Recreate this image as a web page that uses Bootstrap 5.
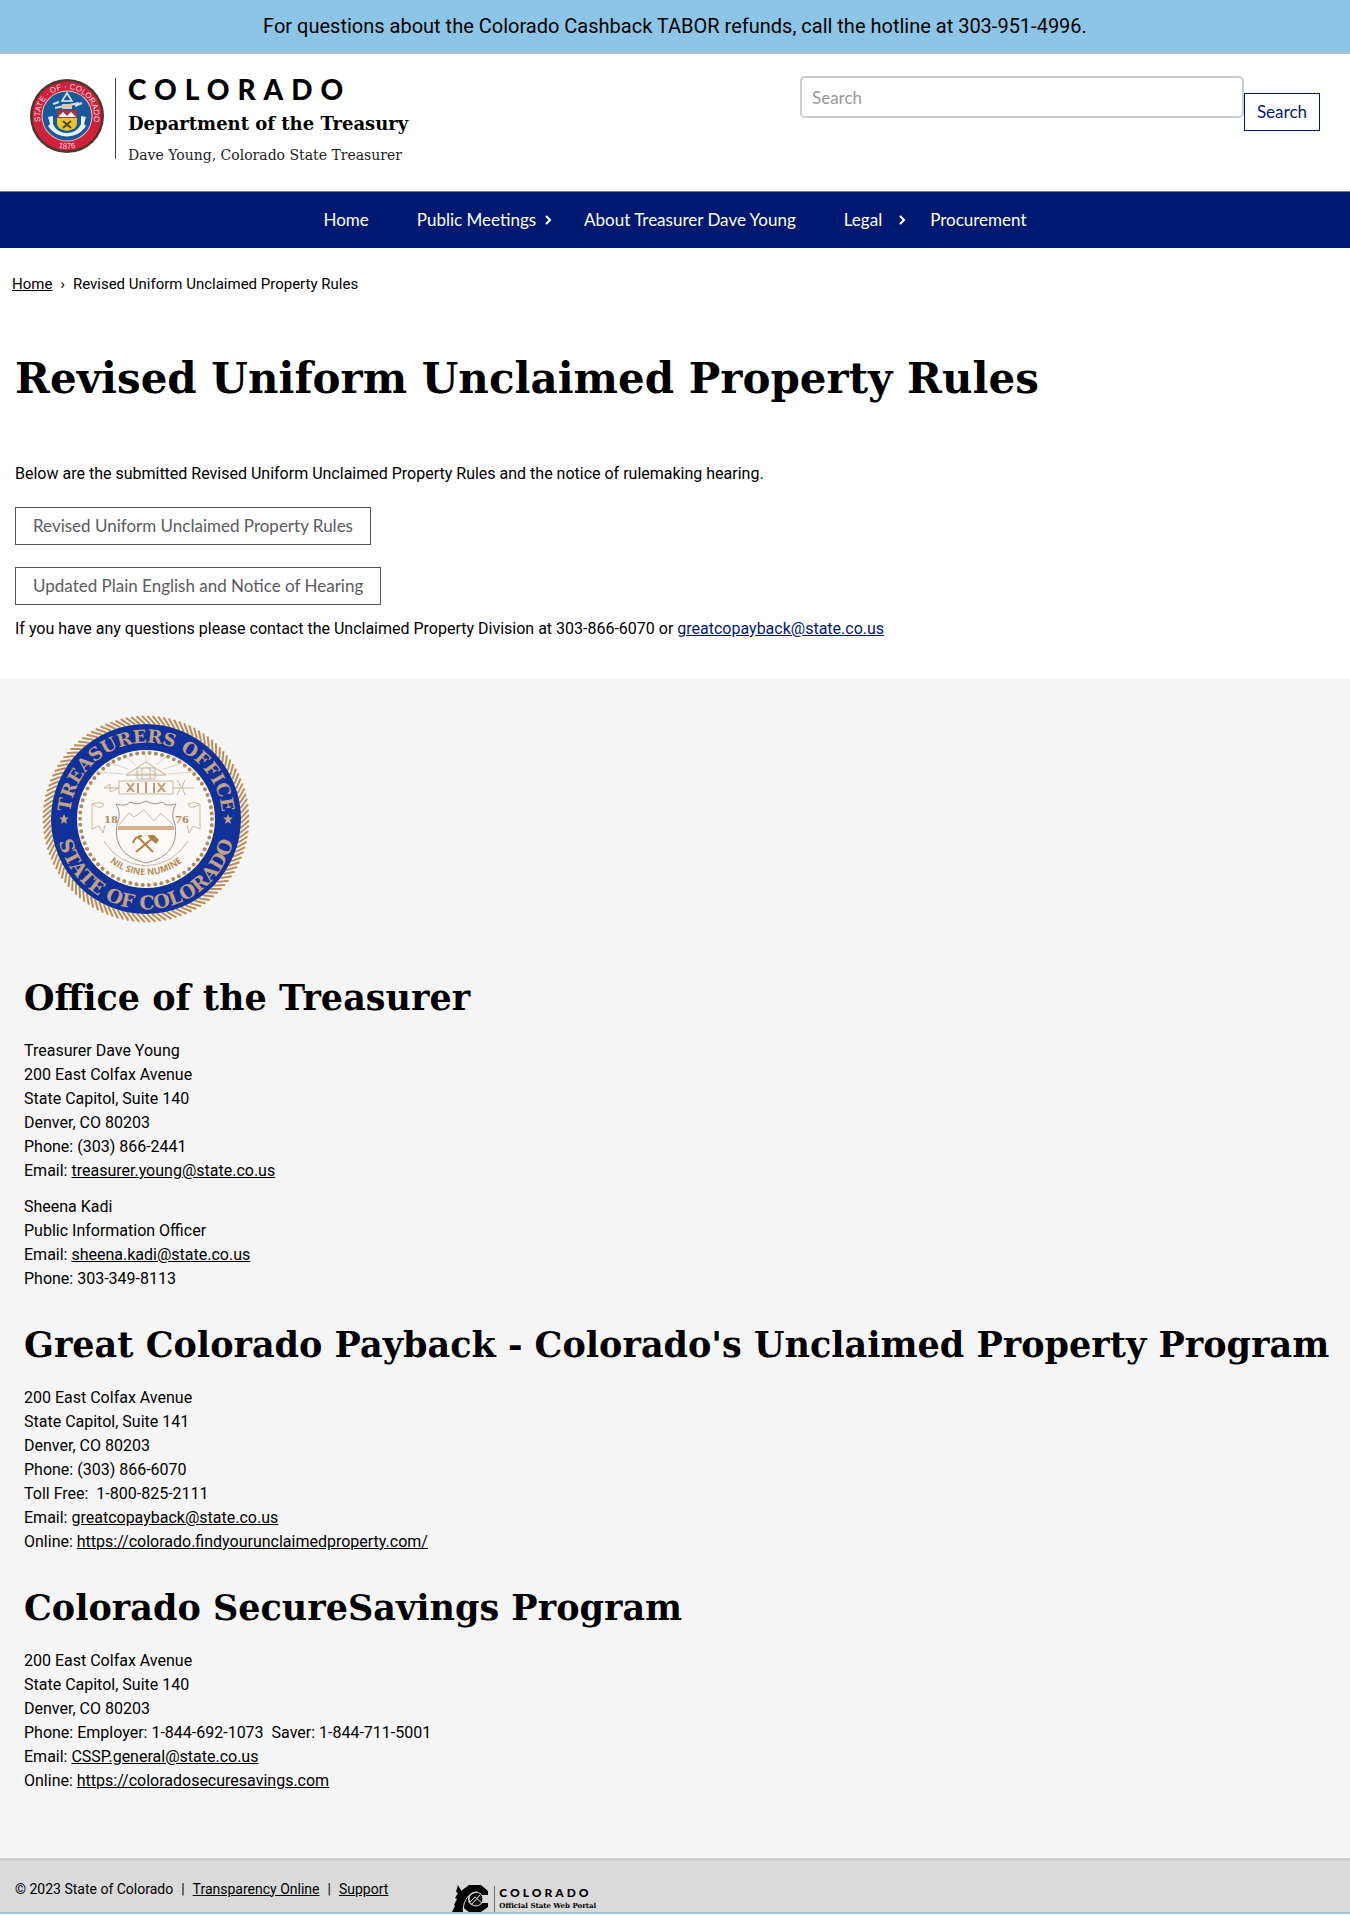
<!DOCTYPE html>
<html lang="en">
<head>
<meta charset="utf-8">
<meta name="viewport" content="width=device-width, initial-scale=1">
<title>Revised Uniform Unclaimed Property Rules | Department of the Treasury</title>
<link href="https://cdn.jsdelivr.net/npm/bootstrap@5.3.0/dist/css/bootstrap.min.css" rel="stylesheet">
<style>
:root { --navy: #001970; --slab: "DejaVu Serif", serif; --humanist: Lato, sans-serif; }
body { font-family: Roboto, "Open Sans", sans-serif; font-size: 16px; line-height: 24px; color: #000; }
.hotline { background: #8dc5e6; border-bottom: 2px solid #a9c3da; font-size: 20px; line-height: 28px; padding: 12px 16px; }
.brand-area { padding: 22px 30px 32px; }
.brand-link { margin-top: 2px; }
.brand-rule { border-left: 1px solid #444; margin-left: 11px; padding-left: 12px; height: 81px; }
.brand-word { font: 900 28px/22px Lato, sans-serif; letter-spacing: 8px; }
.brand-dept { font: bold 18px/24px var(--slab); margin-top: 12px; }
.brand-person { font: 14px/20px var(--slab); margin-top: 9px; color: #222; }
.search-form { width: 520px; max-width: 100%; }
.search-form .form-control { height: 42px; border: 2px solid #ccc; border-radius: 5px; font: 17px/24px var(--humanist); padding: 6px 10px; }
.search-form .form-control::placeholder { color: #999; }
.search-btn, .doc-btn { border-radius: 0; font: 17px/24px var(--humanist); padding: 6px 12px; height: 38px; }
.search-btn { border-color: var(--navy); color: var(--navy); margin-top: 17px; }
.doc-btn { border-color: #555; color: #5a5a60; padding: 6px 17px; }
.doc-list { gap: 22px; }
.main-nav { background: var(--navy); border-top: 1px solid #777; font: 17px/24px var(--humanist); }
.main-nav .nav-link { color: #fff; padding: 16px 24px; }
.main-nav .chevron-slot { width: 8px; }
.crumbs { font-size: 15px; padding: 24px 12px; }
.crumbs a, .site-info a, .legal-bar a { color: #000; }
.content { padding: 0 15px 37px; }
h1, h2 { font-family: var(--slab); font-weight: bold; }
h1 { font-size: 42px; line-height: 56px; margin: 31px 0 55px; }
.content a.mail { color: var(--navy); }
.intro-line { margin: 0 0 21px; }
.contact-line { margin: 12px 0 0; }
.site-info { background: #f5f5f5; padding: 35px 16px 53px 24px; }
.office-seal { margin: 0 0 51px 16px; }
.site-info h2 { font-size: 35px; line-height: 44px; margin: 0 0 19px; }
.site-info p { margin: 0 0 12px; }
.site-info section + section { margin-top: 32px; }
.legal-bar { background: #dadada; border-top: 3px solid #cdcdcd; border-bottom: 2px solid #a4c4de; font-size: 14px; padding: 4px 15px 0; height: 56px; }
.portal-word { font: 900 12px/14px Lato, sans-serif; letter-spacing: 3px; }
.portal-sub { font: bold 7px/12px var(--slab); }
</style>
<script src="https://cdn.jsdelivr.net/npm/bootstrap@5.3.0/dist/js/bootstrap.bundle.min.js"></script>
</head>
<body>
<div class="hotline text-center">For questions about the Colorado Cashback TABOR refunds, call the hotline at 303-951-4996.</div>

<header class="brand-area d-flex flex-wrap justify-content-between align-items-start">
  <a class="brand-link d-flex text-reset text-decoration-none" href="#">
    <svg width="74" height="76" viewBox="-37 -37 74 76" role="img" aria-label="Seal of the State of Colorado">
      <circle cy="1" r="37" fill="#4b3a2a"/>
      <circle cy="1" r="34.500" fill="#d41f3c"/>
      <circle cy="1" r="25.500" fill="#d9d2c0"/>
      <circle cy="1" r="24.500" fill="#17599b"/>
      <path id="ringTop" d="M-21 18A27 27 0 1 1 21 18" fill="none"/>
      <path id="ringBase" d="M-33 1A33 33 0 0 0 33 1" fill="none"/>
      <g fill="#f6dfe0" font-family="Liberation Sans" font-size="8">
        <text text-anchor="middle"><textPath href="#ringTop" startOffset="50%">STATE · OF · COLORADO</textPath></text>
        <text text-anchor="middle"><textPath href="#ringBase" startOffset="50%">1876</textPath></text>
      </g>
      <path d="M0-22L5-14H-5Z" fill="none" stroke="#eee" stroke-width="1.500"/>
      <path d="M-14-11L-8-13M-12-7L12-12M15-12L8-9" stroke="#d7dde0" stroke-width="2"/>
      <path d="M-5-11H5V-6H-5Z" fill="#d8c9b0"/>
      <path d="M-10-5H10V3H-10Z" fill="#a33645"/>
      <path d="M-9 2L-4-3L0 1L4-3L9 2Z" fill="#fff"/>
      <path d="M-19 2L-14 1V9C-9 21 9 21 14 9V1L19 2L17 9L19 11C10 25-10 25-19 11L-17 9Z" fill="#e8f0f8"/>
      <path d="M-10 3H10V8C10 14 4 15 0 16C-4 15-10 14-10 8Z" fill="#e8c52e"/>
      <path d="M-4 6L4 13M4 6L-4 13" stroke="#57420d" stroke-width="2"/>
    </svg>
    <div class="brand-rule">
      <div class="brand-word">COLORADO</div>
      <div class="brand-dept">Department of the Treasury</div>
      <div class="brand-person">Dave Young, Colorado State Treasurer</div>
    </div>
  </a>
  <form class="search-form d-flex align-items-start" role="search">
    <input class="form-control" type="search" placeholder="Search" aria-label="Search">
    <button class="btn search-btn" type="button">Search</button>
  </form>
</header>

<nav class="main-nav" aria-label="Main">
  <ul class="nav justify-content-center">
    <li class="nav-item"><a class="nav-link" href="#">Home</a></li>
    <li class="nav-item d-flex align-items-center"><a class="nav-link pe-0" href="#">Public Meetings</a>
      <svg class="chevron-slot ms-2 me-2" height="10" viewBox="0 0 8 10" aria-hidden="true"><path d="M2 1L6 5L2 9" fill="none" stroke="#fff" stroke-width="2"/></svg></li>
    <li class="nav-item"><a class="nav-link" href="#">About Treasurer Dave Young</a></li>
    <li class="nav-item d-flex align-items-center"><a class="nav-link pe-0" href="#">Legal</a>
      <svg class="chevron-slot ms-3" height="10" viewBox="0 0 8 10" aria-hidden="true"><path d="M2 1L6 5L2 9" fill="none" stroke="#fff" stroke-width="2"/></svg></li>
    <li class="nav-item"><a class="nav-link" href="#">Procurement</a></li>
  </ul>
</nav>

<nav class="crumbs" aria-label="Breadcrumb"><a href="#">Home</a><span class="mx-2">›</span>Revised Uniform Unclaimed Property Rules</nav>

<main class="content">
  <h1>Revised Uniform Unclaimed Property Rules</h1>
  <p class="intro-line">Below are the submitted Revised Uniform Unclaimed Property Rules and the notice of rulemaking hearing.</p>
  <div class="doc-list d-flex flex-column align-items-start">
    <a class="btn doc-btn" href="#">Revised Uniform Unclaimed Property Rules</a>
    <a class="btn doc-btn" href="#">Updated Plain English and Notice of Hearing</a>
  </div>
  <p class="contact-line">If you have any questions please contact the Unclaimed Property Division at 303-866-6070 or <a class="mail" href="#">greatcopayback@state.co.us</a></p>
</main>

<footer>
  <div class="site-info">
    <svg class="office-seal d-block" width="212" height="212" viewBox="-106 -106 212 212" role="img" aria-label="Treasurers Office, State of Colorado seal">
      <g id="rope" stroke="#b98f56" stroke-width="2"></g>
      <circle r="95" fill="#10309a"/>
      <circle r="69" fill="#faf8f6"/>
      <circle r="66" fill="none" stroke="#b08a58" stroke-width="4" stroke-linecap="round" stroke-dasharray="0 6.283"/>
      <path id="arcTop" d="M-75 12A76 76 0 1 1 75 12" fill="none"/>
      <path id="arcBase" d="M-89 -13A90 90 0 1 0 89 -13" fill="none"/>
      <path id="motto" d="M-56 0A56 56 0 0 0 56 0" fill="none"/>
      <g fill="#c2a184" font-family="DejaVu Serif" font-weight="bold" font-size="18" text-anchor="middle">
        <text><textPath href="#arcTop" startOffset="50%">TREASURERS OFFICE</textPath></text>
        <text font-size="19"><textPath href="#arcBase" startOffset="50%">STATE OF COLORADO</textPath></text>
        <text x="-35" y="4" font-size="10" fill="#b08a58">18</text>
        <text x="36" y="4" font-size="10" fill="#b08a58">76</text>
      </g>
      <text fill="#b08a58" font-family="Open Sans" font-weight="bold" font-size="9" text-anchor="middle"><textPath href="#motto" startOffset="50%">NIL SINE NUMINE</textPath></text>
      <path id="star" d="M-82-5L-80.500-1.500L-77-1.500L-80 1L-79 5L-82 3L-85 5L-84 1L-87-1.500L-83.500-1.500Z" fill="#c2a184"/>
      <use href="#star" x="164"/>
      <g fill="none" stroke="#cbb89f" stroke-width="1">
        <path d="M0-57L20-44H-20ZM0-52L11-45H-11ZM0-57V-64M-10-54L-20-62M10-54L20-62M-18-50L-36-56M18-50L36-56M-22-45L-48-47M22-45L48-47" stroke="#ddd3c8"/>
        <path d="M0-57L20-44H-20ZM-9-51H9V-40H-9ZM-4-51V-40M4-51V-40"/>
        <path d="M-27-38H27V-25H-27ZM-27-31H-42L-36-35V-27ZM27-31H48M31-39L35-32L31-24M39-39L36-32L39-24"/>
        <path d="M-30-15Q-20-12-16-17Q-8-13 0-18Q8-13 16-17Q20-12 30-15Q24-5 29 5Q34 36 0 44Q-34 36-29 5Q-24-5-30-15Z" stroke="#9d948d" fill="#fff9f5"/>
        <path d="M-27 6L-17-6L-12-2L-2-9L8 2L15-6L27 6"/>
        <path d="M-54-15Q-44-8-42-15Q-47-18-54-15V10L-47 7L-43 14L-41 6M54-15Q44-8 42-15Q47-18 54-15V10L47 7L43 14L41 6M-42 22Q-28 45 0 47Q28 45 42 22"/>
      </g>
      <path d="M-28 7H28V11H-28Z" fill="#d5b190"/>
      <path d="M-19-36L-12-27M-12-36L-19-27M0-37V-26M12-36L19-27M19-36L12-27M-8-36V-26M8-36V-26" stroke="#bf9b73" stroke-width="2"/>
      <path d="M-10 33L8 18M7 33L-8 18M-13 24Q-11 17-4 17" stroke="#b08045" stroke-width="2" fill="none"/>
      <path d="M2 16H8L13 21L10 25L3 19Z" fill="#b08045"/>
    </svg>
    <section>
      <h2>Office of the Treasurer</h2>
      <p>Treasurer Dave Young<br>200 East Colfax Avenue<br>State Capitol, Suite 140<br>Denver, CO 80203<br>Phone: (303) 866-2441<br>Email: <a href="#">treasurer.young@state.co.us</a></p>
      <p>Sheena Kadi<br>Public Information Officer<br>Email: <a href="#">sheena.kadi@state.co.us</a><br>Phone: 303-349-8113</p>
    </section>
    <section>
      <h2>Great Colorado Payback - Colorado's Unclaimed Property Program</h2>
      <p>200 East Colfax Avenue<br>State Capitol, Suite 141<br>Denver, CO 80203<br>Phone: (303) 866-6070<br>Toll Free: &nbsp;1-800-825-2111<br>Email: <a href="#">greatcopayback@state.co.us</a><br>Online: <a href="#">https://colorado.findyourunclaimedproperty.com/</a></p>
    </section>
    <section>
      <h2>Colorado SecureSavings Program</h2>
      <p>200 East Colfax Avenue<br>State Capitol, Suite 140<br>Denver, CO 80203<br>Phone: Employer: 1-844-692-1073 &nbsp;Saver: 1-844-711-5001<br>Email: <a href="#">CSSP.general@state.co.us</a><br>Online: <a href="#">https://coloradosecuresavings.com</a></p>
    </section>
  </div>
  <div class="legal-bar d-flex align-items-center">
    <div>© 2023 State of Colorado<span class="mx-2">|</span><a href="#">Transparency Online</a><span class="mx-2">|</span><a href="#">Support</a></div>
    <a class="d-flex align-items-end align-self-end text-decoration-none ms-5 ps-3" href="#">
      <svg width="38" height="27" viewBox="0 0 38 27" role="img" aria-label="Colorado logo">
        <path d="M6 0L10 7L9 8L11 12V27H0L3 21L2 20L5 14L3 13L6 8L4 7Z"/>
        <path d="M17 0H29L36 6V10H29Q27 7 23 7Q16 8 16 14Q16 20 23 21Q27 21 29 18H36V22L29 27H17L9 21V6Z"/>
        <circle cx="24" cy="14" r="7" fill="#111" stroke="#ddd"/>
        <path d="M18 17L23 12L30 18M20 19L28 10M11 25Q12 9 25 7" fill="none" stroke="#ddd"/>
      </svg>
      <span class="border-start border-secondary ms-1 ps-1">
        <span class="portal-word d-block">COLORADO</span>
        <span class="portal-sub d-block">Official State Web Portal</span>
      </span>
    </a>
  </div>
</footer>
<script>
// Rope border of the seal: short slanted strands set round the circle.
const rope = document.getElementById('rope');
for (let i = 0; i < 120; i++) {
  const strand = document.createElementNS('http://www.w3.org/2000/svg', 'path');
  strand.setAttribute('d', 'M-4 -103L4 -95');
  strand.setAttribute('transform', 'rotate(' + i * 3 + ')');
  rope.appendChild(strand);
}
</script>
</body>
</html>
